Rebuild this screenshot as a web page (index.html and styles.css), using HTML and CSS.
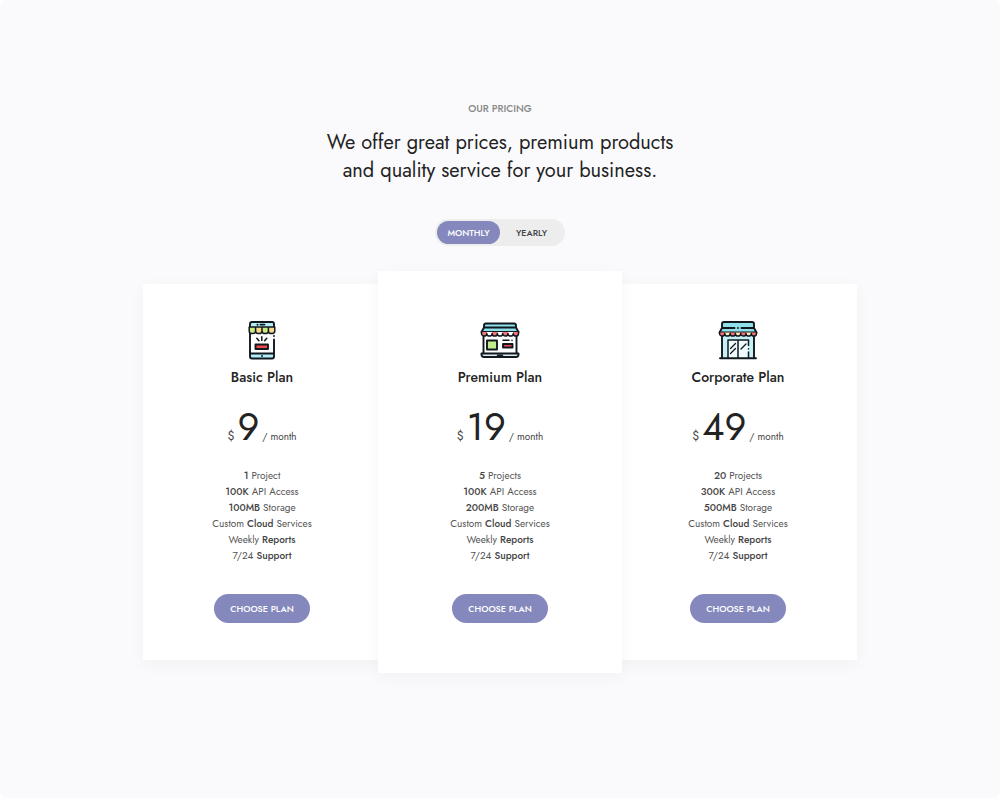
FILE: index.html
```html
<!DOCTYPE html>
<html lang="en">
<head>
<meta charset="utf-8">
<meta name="viewport" content="width=device-width, initial-scale=1">
<title>Our Pricing</title>
<link rel="stylesheet" href="styles.css">
</head>
<body>
<main class="page">
  <header class="intro">
    <p class="eyebrow">OUR PRICING</p>
    <h1 class="headline">We offer great prices, premium products<br>and quality service for your business.</h1>
  </header>

  <form class="toggle" aria-label="Billing period">
    <input class="toggle-input" type="radio" name="period" id="monthly" checked>
    <label class="toggle-option" for="monthly">MONTHLY</label>
    <input class="toggle-input" type="radio" name="period" id="yearly">
    <label class="toggle-option" for="yearly">YEARLY</label>
  </form>

  <section class="plans">
    <article class="plan">
      <svg class="plan-icon" viewBox="0 0 40 40" aria-hidden="true">
        <rect x="8" y="2" width="24" height="36.5" rx="2" fill="#fff"/>
        <path d="M8 7V4q0-2 2-2h20q2 0 2 2v3zM8 33.500h24v3q0 2-2 2H10q-2 0-2-2z" fill="#b3edf5"/>
        <path class="line" d="M8 12V36.500q0 2 2 2h20q2 0 2-2V19.500M32 16v.1M8 7V4q0-2 2-2h20q2 0 2 2v3M8 33.500h24M18.500 4.600h4M15.500 4.600v.1M20 36v.1"/>
        <path d="M7.200 7h6.400v4a3.200 2.600 0 0 1-6.400 0zM20 7h6.400v4a3.200 2.600 0 0 1-6.400 0z" fill="#c9ec80"/>
        <path d="M13.600 7H20v4a3.200 2.600 0 0 1-6.400 0zM26.400 7h6.400v4a3.200 2.600 0 0 1-6.400 0z" fill="#f8d98c"/>
        <path class="line medium" d="M7.200 7h25.600v4a3.200 2.600 0 0 1-6.400 0a3.200 2.600 0 0 1-6.400 0a3.200 2.600 0 0 1-6.400 0a3.200 2.600 0 0 1-6.400 0zM13.600 7v4M20 7v4M26.400 7v4"/>
        <rect class="line red" x="13.500" y="24.500" width="12.500" height="4.500"/>
        <path class="line medium" d="M19.800 16.800v3.700M14.800 18.200l2.200 2.600M24.800 18.200l-2.200 2.600"/>
      </svg>
      <h2 class="plan-name">Basic Plan</h2>
      <p class="price"><span class="currency">$</span><span class="amount">9</span><span class="period">/ month</span></p>
      <ul class="features">
        <li><b>1</b> Project</li>
        <li><b>100K</b> API Access</li>
        <li><b>100MB</b> Storage</li>
        <li>Custom <b>Cloud</b> Services</li>
        <li>Weekly <b>Reports</b></li>
        <li>7/24 <b>Support</b></li>
      </ul>
      <button class="choose" type="button">CHOOSE PLAN</button>
    </article>

    <article class="plan plan-featured">
      <svg class="plan-icon" viewBox="0 0 40 40" aria-hidden="true">
        <path d="M3.500 12h33v22h-33z" fill="#fff"/>
        <path d="M5.500 3.500h29q1.500 0 1.500 2V8l2.500 4h-37L4 8V5.500q0-2 1.500-2z" fill="#8fe0e8"/>
        <path class="line" d="M3.500 16.500V33M36.500 16.500V33M4 7.500v-2q0-2 2-2h28q2 0 2 2v2M4 7.500h32l2.500 4.500h-37z"/>
        <path d="M1.500 12h5.300v1.500a2.650 2.600 0 0 1-5.300 0zM12.100 12h5.300v1.500a2.650 2.600 0 0 1-5.300 0zM22.700 12H28v1.500a2.650 2.600 0 0 1-5.300 0zM33.300 12h5.200v1.500a2.600 2.600 0 0 1-5.200 0z" fill="#f5747b"/>
        <path d="M6.800 12h5.300v1.500a2.650 2.600 0 0 1-5.300 0zM17.400 12h5.300v1.500a2.650 2.600 0 0 1-5.300 0zM28 12h5.300v1.500a2.650 2.600 0 0 1-5.300 0z" fill="#fff"/>
        <path class="line medium" d="M1.500 12v1.500a2.650 2.600 0 0 0 5.300 0a2.650 2.600 0 0 0 5.300 0a2.650 2.600 0 0 0 5.300 0a2.650 2.600 0 0 0 5.300 0a2.650 2.600 0 0 0 5.300 0a2.650 2.600 0 0 0 5.300 0a2.600 2.600 0 0 0 5.200 0V12"/>
        <rect class="line green" x="7" y="20.500" width="10" height="9"/>
        <rect class="line red" x="23" y="24" width="9.500" height="3.500"/>
        <path class="line medium" d="M23 20.300h6M32 20.300v.1"/>
        <path class="line base" d="M1.500 33.500h37v1q0 2.500-2.500 2.500H4q-2.500 0-2.500-2.500z"/>
        <path class="line medium" d="M17.500 35.200h5"/>
      </svg>
      <h2 class="plan-name">Premium Plan</h2>
      <p class="price"><span class="currency">$</span><span class="amount">19</span><span class="period">/ month</span></p>
      <ul class="features">
        <li><b>5</b> Projects</li>
        <li><b>100K</b> API Access</li>
        <li><b>200MB</b> Storage</li>
        <li>Custom <b>Cloud</b> Services</li>
        <li>Weekly <b>Reports</b></li>
        <li>7/24 <b>Support</b></li>
      </ul>
      <button class="choose" type="button">CHOOSE PLAN</button>
    </article>

    <article class="plan">
      <svg class="plan-icon" viewBox="0 0 40 40" aria-hidden="true">
        <path d="M4.500 12h31v26h-31z" fill="#c5f0f6"/>
        <path d="M5.500 2h29Q36 2 36 4v4l2.500 4.500h-37L4 8V4q0-2 1.500-2z" fill="#8fe0e8"/>
        <path class="line" d="M4 16.500V38M36 16.500V38M4 8V4q0-2 2-2h28q2 0 2 2v4M4 8h12.500M23.500 8H36M20 8v.1M4 8l-2.500 4.500h37L36 8"/>
        <path d="M1.500 12.500h5.300v1a2.650 2.600 0 0 1-5.300 0zM12.100 12.500h5.300v1a2.650 2.600 0 0 1-5.300 0zM22.700 12.500H28v1a2.650 2.600 0 0 1-5.300 0zM33.300 12.500h5.200v1a2.600 2.600 0 0 1-5.200 0z" fill="#f5747b"/>
        <path d="M6.800 12.500h5.300v1a2.650 2.600 0 0 1-5.300 0zM17.400 12.500h5.300v1a2.650 2.600 0 0 1-5.300 0zM28 12.500h5.300v1a2.650 2.600 0 0 1-5.300 0z" fill="#ffeab0"/>
        <path class="line medium" d="M1.500 12.500v1a2.650 2.600 0 0 0 5.300 0a2.650 2.600 0 0 0 5.300 0a2.650 2.600 0 0 0 5.300 0a2.650 2.600 0 0 0 5.300 0a2.650 2.600 0 0 0 5.300 0a2.650 2.600 0 0 0 5.300 0a2.600 2.600 0 0 0 5.200 0v-1"/>
        <path d="M10 20h21v18H10z" fill="#eefafc"/>
        <path class="line medium" d="M10 38V20h20.500v5.500M30.500 28.800v.1M30.500 32v6M20 20v18"/>
        <path class="line" d="M2 38.200h36"/>
        <path class="line thin" d="M12.500 28.500l5-5M12.500 33.500l5-5M23 29l5-5"/>
      </svg>
      <h2 class="plan-name">Corporate Plan</h2>
      <p class="price"><span class="currency">$</span><span class="amount">49</span><span class="period">/ month</span></p>
      <ul class="features">
        <li><b>20</b> Projects</li>
        <li><b>300K</b> API Access</li>
        <li><b>500MB</b> Storage</li>
        <li>Custom <b>Cloud</b> Services</li>
        <li>Weekly <b>Reports</b></li>
        <li>7/24 <b>Support</b></li>
      </ul>
      <button class="choose" type="button">CHOOSE PLAN</button>
    </article>
  </section>
</main>
</body>
</html>
```
FILE: styles.css
```css
* {
  box-sizing: border-box;
}

body {
  margin: 0;
  background: #fff;
  color: #555;
  font-family: Jost, Lato, sans-serif;
}

.page {
  display: flex;
  flex-direction: column;
  align-items: center;
  min-height: 100vh;
  padding: 100px 24px;
  border-radius: 8px;
  background: #fafafc;
}

.intro {
  text-align: center;
}

.eyebrow {
  margin: 0 0 12px;
  color: #888;
  font-size: 10px;
  font-weight: 500;
  line-height: 17px;
}

.headline {
  margin: 0;
  color: #232323;
  font-size: 20px;
  font-weight: 400;
  line-height: 28px;
}

.toggle {
  display: flex;
  width: 130px;
  margin: 34px 0 38px;
  padding: 2px;
  border-radius: 14px;
  background: #ededee;
}

.toggle-input {
  position: absolute;
  opacity: 0;
}

.toggle-option {
  flex: 1;
  border-radius: 12px;
  color: #444;
  font-size: 9px;
  font-weight: 500;
  line-height: 23px;
  text-align: center;
  cursor: pointer;
}

.toggle-input:checked + .toggle-option {
  background: #8488bd;
  color: #fff;
}

.toggle-input:focus-visible + .toggle-option {
  outline: 2px solid #555;
}

.plans {
  display: grid;
  grid-template-columns: repeat(3, 1fr);
  width: 100%;
  max-width: 714px;
}

.plan {
  display: flex;
  flex-direction: column;
  align-items: center;
  padding: 36px 12px 37px;
  background: #fff;
  box-shadow: 0 4px 16px rgba(30, 30, 60, 0.04);
}

.plan-featured {
  z-index: 1;
  margin: -13px -3px;
  padding-top: 49px;
  padding-bottom: 50px;
}

.plan-icon {
  width: 40px;
  height: 40px;
}

.line {
  fill: none;
  stroke: #111820;
  stroke-width: 1.9;
  stroke-linecap: round;
  stroke-linejoin: round;
}

.medium {
  stroke-width: 1.5;
}

.thin {
  stroke-width: 1.3;
}

.red {
  fill: #f0474e;
}

.green {
  fill: #c3ec8c;
}

.base {
  fill: #dceef2;
}

.plan-name {
  margin: 7px 0 21px;
  color: #232323;
  font-size: 14px;
  font-weight: 500;
  line-height: 20px;
}

.price {
  display: flex;
  align-items: baseline;
  gap: 3px;
  margin: 0 0 22px;
  color: #444;
  line-height: 1;
}

.currency {
  font-size: 12px;
}

.amount {
  color: #232323;
  font-size: 38px;
}

.period {
  font-size: 10px;
}

.features {
  margin: 0 0 30px;
  padding: 0;
  font-size: 10px;
  line-height: 16px;
  list-style: none;
  text-align: center;
}

.features b {
  color: #444;
  font-weight: 500;
}

.choose {
  height: 29px;
  padding: 0 16px;
  border: 0;
  border-radius: 15px;
  background: #8488bd;
  color: #fff;
  font: inherit;
  font-size: 9px;
  font-weight: 500;
  cursor: pointer;
}
```
